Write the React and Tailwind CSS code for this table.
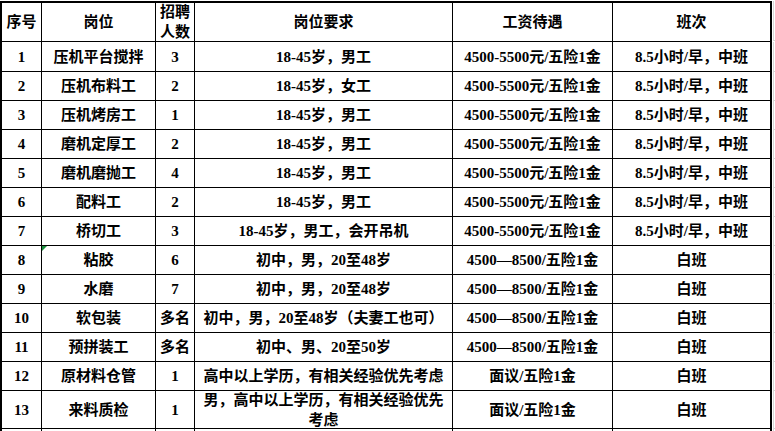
import React from 'react';

const rows = [
  ['1', '压机平台搅拌', '3', '18-45岁，男工', '4500-5500元/五险1金', '8.5小时/早，中班'],
  ['2', '压机布料工', '2', '18-45岁，女工', '4500-5500元/五险1金', '8.5小时/早，中班'],
  ['3', '压机烤房工', '1', '18-45岁，男工', '4500-5500元/五险1金', '8.5小时/早，中班'],
  ['4', '磨机定厚工', '2', '18-45岁，男工', '4500-5500元/五险1金', '8.5小时/早，中班'],
  ['5', '磨机磨抛工', '4', '18-45岁，男工', '4500-5500元/五险1金', '8.5小时/早，中班'],
  ['6', '配料工', '2', '18-45岁，男工', '4500-5500元/五险1金', '8.5小时/早，中班'],
  ['7', '桥切工', '3', '18-45岁，男工，会开吊机', '4500-5500元/五险1金', '8.5小时/早，中班'],
  ['8', '粘胶', '6', '初中，男，20至48岁', '4500—8500/五险1金', '白班'],
  ['9', '水磨', '7', '初中，男，20至48岁', '4500—8500/五险1金', '白班'],
  ['10', '软包装', '多名', '初中，男，20至48岁（夫妻工也可）', '4500—8500/五险1金', '白班'],
  ['11', '预拼装工', '多名', '初中、男、20至50岁', '4500—8500/五险1金', '白班'],
  ['12', '原材料仓管', '1', '高中以上学历，有相关经验优先考虑', '面议/五险1金', '白班'],
  ['13', '来料质检', '1', ['男，高中以上学历，有相关经验优先', '考虑'], '面议/五险1金', '白班'],
];

// border for each of the 6 table columns + trailing excel gridline column
const colBorder = [
  'border-l-2 border-r',
  'border-r',
  'border-r',
  'border-r',
  'border-r',
  'border-r-2',
];

const Cell = ({ col, top, h, children, green }) => (
  <div
    className={`relative flex items-center justify-center text-center border-b border-black ${colBorder[col]} ${top ? 'border-t-2' : ''} ${h}`}
  >
    {green && (
      <div className="absolute left-0 top-0 w-0 h-0 border-t-[5px] border-t-[#1a8f3c] border-r-[5px] border-r-transparent" />
    )}
    {children}
  </div>
);

const Grid = ({ top, h }) => (
  <div className={`ml-px border-l border-b border-[#d6d6d6] ${top ? 'mt-px' : ''} ${h}`} />
);

export default function App() {
  return (
    <div
      className="w-[775px] h-[431px] overflow-hidden bg-white text-black font-bold text-[15px] leading-5 pt-px"
      style={{ fontFamily: "'Liberation Serif', 'Noto Sans CJK SC', serif" }}
    >
      <div className="grid grid-cols-[42px_114px_39px_258px_160px_159px_3px]">
        {/* header */}
        <Cell col={0} top h="h-[41px]">序号</Cell>
        <Cell col={1} top h="h-[41px]">岗位</Cell>
        <Cell col={2} top h="h-[41px]">
          <div>招聘<br />人数</div>
        </Cell>
        <Cell col={3} top h="h-[41px]">岗位要求</Cell>
        <Cell col={4} top h="h-[41px]">工资待遇</Cell>
        <Cell col={5} top h="h-[41px]">班次</Cell>
        <Grid h="h-[40px]" />

        {rows.map((r, i) => {
          const h = i === 0 ? 'h-[30px]' : i === 12 ? 'h-[38px]' : 'h-[29px]';
          return (
            <React.Fragment key={r[0]}>
              {r.map((v, c) => (
                <Cell key={c} col={c} h={h} green={i === 7 && c === 1}>
                  {Array.isArray(v) ? (
                    <div>{v[0]}<br />{v[1]}</div>
                  ) : (
                    <span className="whitespace-nowrap">{v}</span>
                  )}
                </Cell>
              ))}
              <Grid h={h} />
            </React.Fragment>
          );
        })}

        {/* partial next row */}
        {colBorder.map((b, c) => (
          <div key={c} className={`h-[4px] border-black ${b}`} />
        ))}
        <div className="ml-px border-l border-[#d6d6d6] h-[4px]" />
      </div>
    </div>
  );
}
